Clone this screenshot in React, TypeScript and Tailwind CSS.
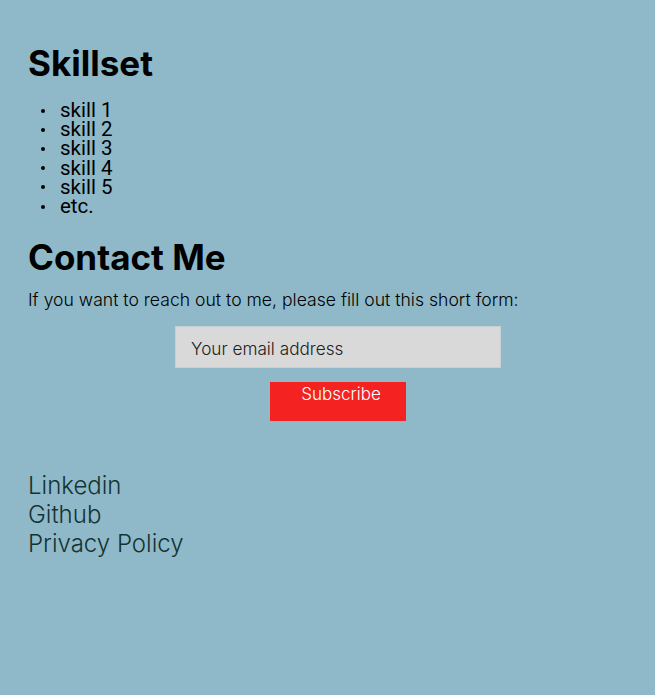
import React from 'react';

const skills = ['skill 1', 'skill 2', 'skill 3', 'skill 4', 'skill 5', 'etc.'];

const App: React.FC = () => {
  return (
    <div className="min-h-screen bg-[#8fb9c8] font-['Inter',sans-serif] text-black">
      <div className="px-[28px] pt-[42px]">
        {/* Skills */}
        <h2 className="text-[35px] font-bold leading-[1.2]">Skillset</h2>
        <ul className="mt-[17px] font-['Roboto',sans-serif] text-[20.5px] leading-[19.2px]">
          {skills.map((s) => (
            <li key={s} className="flex items-center">
              <span className="ml-[13px] mr-[15px] h-[4px] w-[4px] rounded-full bg-black" />
              {s}
            </li>
          ))}
        </ul>

        {/* Contact */}
        <h2 className="mt-[20px] text-[35px] font-bold leading-[1.2]">Contact Me</h2>
        <p className="mt-[9px] text-[17.6px] font-light">
          If you want to reach out to me, please fill out this short form:
        </p>
        <form className="mr-[-21px] mt-[12px] flex flex-col items-center">
          <input
            type="email"
            placeholder="Your email address"
            className="h-[42px] w-[326px] border border-[#c9d0d3] bg-[#d9d9d9] px-[15px] pt-[3px] text-[17.2px] font-light placeholder:text-[#222]"
          />
          <button
            type="button"
            className="mt-[14px] h-[39px] w-[136px] bg-[#f52222] pb-[14px] pl-[6px] text-[17px] font-light text-white"
          >
            Subscribe
          </button>
        </form>

        {/* Footer links */}
        <div className="mt-[50px] flex flex-col text-[24px] font-light leading-[29px] text-[#143434]">
          <a href="#">Linkedin</a>
          <a href="#">Github</a>
          <a href="#">Privacy Policy</a>
        </div>
      </div>
    </div>
  );
};

export default App;
